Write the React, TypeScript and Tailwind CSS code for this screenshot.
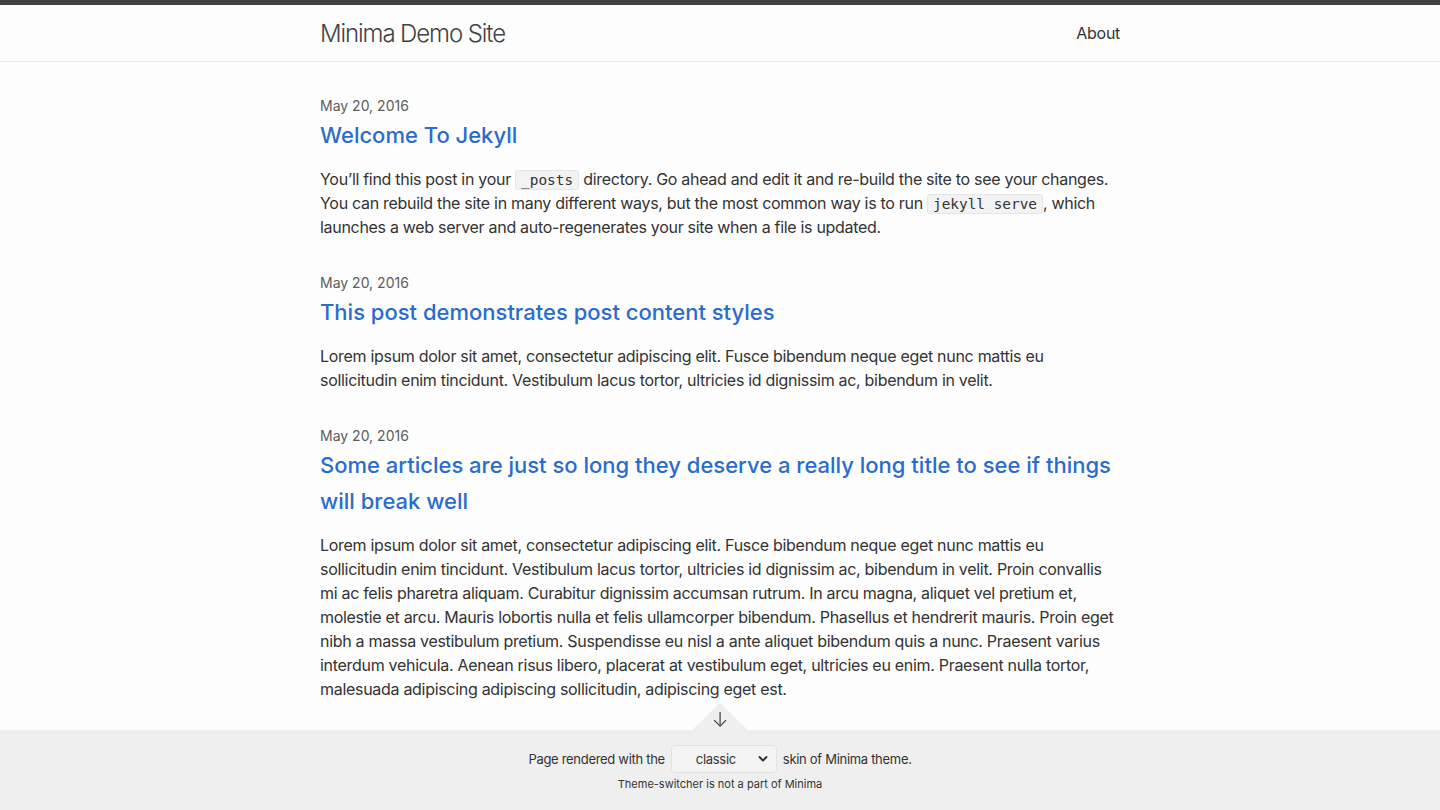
import React from 'react';

const posts = [
  {
    date: 'May 20, 2016',
    title: 'Welcome To Jekyll',
    body: (
      <>
        You’ll find this post in your <Code>_posts</Code> directory. Go ahead and edit it and re-build the site to see
        your changes. You can rebuild the site in many different ways, but the most common way is to run{' '}
        <Code>jekyll serve</Code>, which launches a web server and auto-regenerates your site when a file is updated.
      </>
    ),
  },
  {
    date: 'May 20, 2016',
    title: 'This post demonstrates post content styles',
    body: (
      <>
        Lorem ipsum dolor sit amet, consectetur adipiscing elit. Fusce bibendum neque eget nunc mattis eu sollicitudin
        enim tincidunt. Vestibulum lacus tortor, ultricies id dignissim ac, bibendum in velit.
      </>
    ),
  },
  {
    date: 'May 20, 2016',
    title: 'Some articles are just so long they deserve a really long title to see if things will break well',
    body: (
      <>
        Lorem ipsum dolor sit amet, consectetur adipiscing elit. Fusce bibendum neque eget nunc mattis eu sollicitudin
        enim tincidunt. Vestibulum lacus tortor, ultricies id dignissim ac, bibendum in velit. Proin convallis mi ac
        felis pharetra aliquam. Curabitur dignissim accumsan rutrum. In arcu magna, aliquet vel pretium et, molestie et
        arcu. Mauris lobortis nulla et felis ullamcorper bibendum. Phasellus et hendrerit mauris. Proin eget nibh a
        massa vestibulum pretium. Suspendisse eu nisl a ante aliquet bibendum quis a nunc. Praesent varius interdum
        vehicula. Aenean risus libero, placerat at vestibulum eget, ultricies eu enim. Praesent nulla tortor, malesuada
        adipiscing adipiscing sollicitudin, adipiscing eget est.
      </>
    ),
  },
];

function Code({ children }: { children: React.ReactNode }) {
  return (
    <code className="font-['DejaVu_Sans_Mono',monospace] text-[14.4px] leading-none tracking-normal bg-[#f3f3f3] border border-[#e6e6e6] rounded-[3px] px-[5px] py-[1px]">
      {children}
    </code>
  );
}

export default function App() {
  return (
    <div className="min-h-screen bg-[#fdfdfd] font-['Inter',sans-serif] text-[#333] text-base leading-6 tracking-[-0.3px] border-t-[5px] border-[#424242]">
      {/* Header */}
      <header className="h-[57px] border-b border-[#e8e8e8]">
        <div className="max-w-[800px] mx-auto h-full flex items-center justify-between">
          <a href="#" className="text-[24px] font-light tracking-[-1.1px] text-[#424242] pt-px">
            Minima Demo Site
          </a>
          <a href="#" className="text-base text-[#333]">About</a>
        </div>
      </header>

      {/* Posts */}
      <main className="pt-[32px] pb-[140px]">
        <ul className="max-w-[800px] mx-auto">
          {posts.map((p, i) => (
            <li key={i} className="mb-[32px]">
              <span className="block text-sm leading-6 tracking-normal text-[#5c5c5c]">{p.date}</span>
              <h3 className="text-[22px] leading-9 font-medium tracking-normal text-[#2a6ccb] -mt-px mb-[14px]">
                <a href="#">{p.title}</a>
              </h3>
              <p>{p.body}</p>
            </li>
          ))}
        </ul>
      </main>

      {/* Theme switcher */}
      <div className="fixed bottom-0 left-0 right-0 h-20 bg-[#efefef] flex flex-col items-center pt-[15px]">
        <div className="absolute -top-[27px] left-1/2 -translate-x-1/2 w-0 h-0 border-l-[28px] border-r-[28px] border-b-[27px] border-l-transparent border-r-transparent border-b-[#efefef]" />
        <span className="absolute -top-[22px] left-1/2 -translate-x-1/2 text-[#444] text-[20px] leading-6 font-light">↓</span>
        <div className="flex items-center gap-[6px] text-[13px] text-[#333]">
          <span>Page rendered with the</span>
          <div className="relative w-[106px] h-7 rounded-[4px] border border-[#e2e2e2] bg-[#f3f3f3] flex items-center justify-center">
            <span className="pr-4">classic</span>
            <svg className="absolute right-[8px] top-1/2 -translate-y-1/2" width="10" height="8" viewBox="0 0 10 8" fill="none">
              <path d="M1.5 2l3.5 3.5L8.5 2" stroke="#333" strokeWidth="2" strokeLinecap="round" strokeLinejoin="round" />
            </svg>
          </div>
          <span>skin of Minima theme.</span>
        </div>
        <div className="-mt-px text-[11px] text-[#333] tracking-normal">Theme-switcher is not a part of Minima</div>
      </div>
    </div>
  );
}
